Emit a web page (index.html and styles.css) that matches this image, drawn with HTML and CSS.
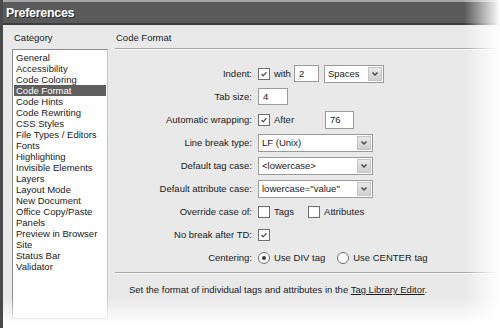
FILE: index.html
```html
<!DOCTYPE html>
<html>
<head>
<meta charset="utf-8">
<link rel="stylesheet" href="styles.css">
</head>
<body>
<div class="window">
  <div class="titlebar"><span class="title">Preferences</span></div>
  <div class="body">
    <div class="sidebar">
      <div class="cat-label">Category</div>
      <ul class="list">
        <li>General</li>
        <li>Accessibility</li>
        <li>Code Coloring</li>
        <li class="sel">Code Format</li>
        <li>Code Hints</li>
        <li>Code Rewriting</li>
        <li>CSS Styles</li>
        <li>File Types / Editors</li>
        <li>Fonts</li>
        <li>Highlighting</li>
        <li>Invisible Elements</li>
        <li>Layers</li>
        <li>Layout Mode</li>
        <li>New Document</li>
        <li>Office Copy/Paste</li>
        <li>Panels</li>
        <li>Preview in Browser</li>
        <li>Site</li>
        <li>Status Bar</li>
        <li>Validator</li>
      </ul>
    </div>
    <div class="main">
      <div class="section-title">Code Format</div>
      <div class="form">
        <div class="lbl">Indent:</div>
        <div class="ctl">
          <span class="cb checked"><svg viewBox="0 0 12 12"><path d="M3 6l2 2.2 4-4.4" /></svg></span>
          <span class="txt">with</span>
          <span class="input w-indent">2</span>
          <span class="select w-spaces"><span class="val">Spaces</span><span class="arrow"><svg viewBox="0 0 8 6"><path d="M1.5 1.5l2.5 2.5 2.5-2.5"/></svg></span></span>
        </div>

        <div class="lbl">Tab size:</div>
        <div class="ctl"><span class="input w-tab">4</span></div>

        <div class="lbl">Automatic wrapping:</div>
        <div class="ctl">
          <span class="cb checked"><svg viewBox="0 0 12 12"><path d="M3 6l2 2.2 4-4.4" /></svg></span>
          <span class="txt after">After</span>
          <span class="input w-wrap">76</span>
        </div>

        <div class="lbl">Line break type:</div>
        <div class="ctl"><span class="select w-wide"><span class="val">LF (Unix)</span><span class="arrow"><svg viewBox="0 0 8 6"><path d="M1.5 1.5l2.5 2.5 2.5-2.5"/></svg></span></span></div>

        <div class="lbl">Default tag case:</div>
        <div class="ctl"><span class="select w-wide"><span class="val">&lt;lowercase&gt;</span><span class="arrow"><svg viewBox="0 0 8 6"><path d="M1.5 1.5l2.5 2.5 2.5-2.5"/></svg></span></span></div>

        <div class="lbl">Default attribute case:</div>
        <div class="ctl"><span class="select w-wide"><span class="val">lowercase="value"</span><span class="arrow"><svg viewBox="0 0 8 6"><path d="M1.5 1.5l2.5 2.5 2.5-2.5"/></svg></span></span></div>

        <div class="lbl">Override case of:</div>
        <div class="ctl">
          <span class="cb"></span><span class="txt tags">Tags</span>
          <span class="cb"></span><span class="txt">Attributes</span>
        </div>

        <div class="lbl">No break after TD:</div>
        <div class="ctl"><span class="cb checked"><svg viewBox="0 0 12 12"><path d="M3 6l2 2.2 4-4.4" /></svg></span></div>

        <div class="lbl">Centering:</div>
        <div class="ctl">
          <span class="radio on"></span><span class="txt div">Use DIV tag</span>
          <span class="radio"></span><span class="txt">Use CENTER tag</span>
        </div>
      </div>
      <div class="footer">Set the format of individual tags and attributes in the <span class="link">Tag Library Editor</span>.</div>
    </div>
  </div>
  <div class="fade-right"></div>
  <div class="fade-bottom"></div>
</div>
</body>
</html>
```

FILE: styles.css
```css
* { box-sizing: border-box; }
html, body { margin: 0; padding: 0; background: #fff; }
body { width: 500px; height: 328px; overflow: hidden; font-family: "Liberation Sans", Arial, sans-serif; font-size: 9.5px; color: #1a1a1a; }

.window { position: relative; width: 500px; height: 328px; background: #e9e9e9; border-left: 3px solid #4a4a4a; overflow: hidden; }

.titlebar { height: 25px; background: #5a5a5a; border-top: 2px solid #a8a8a8; border-bottom: 2px solid #3c3c3c; display: flex; align-items: center; padding-left: 3px; }
.title { color: #fff; font-weight: bold; font-size: 12.5px; letter-spacing: -0.3px; text-shadow: 1px 1px 0 #2a2a2a; }

.body { display: flex; }
.sidebar { width: 109px; padding-left: 9px; flex: none; }
.cat-label { height: 24px; line-height: 26px; padding-left: 2px; }
.list { list-style: none; margin: 0; padding: 2px 1px; background: #fff; border: 1px solid #8c8c8c; border-right-color: #c8c8c8; height: 270px; width: 96px; }
.list li { height: 11px; line-height: 11px; padding-left: 2px; white-space: nowrap; }
.list li.sel { background: #5f5f5f; color: #fff; }

.main { flex: 1; padding-left: 3px; }
.section-title { height: 24px; line-height: 26px; padding-left: 1px; border-bottom: 1px solid #a8a8a8; box-shadow: 0 1px 0 #fafafa; }

.form { display: grid; grid-template-columns: 137px auto; grid-auto-rows: 23px; column-gap: 6px; padding-top: 13px; }
.lbl { text-align: right; display: flex; align-items: center; justify-content: flex-end; white-space: nowrap; }
.ctl { display: flex; align-items: center; white-space: nowrap; }

.cb { width: 12px; height: 12px; border: 1px solid #6e6e6e; background: #fff; flex: none; display: inline-flex; }
.cb svg { width: 10px; height: 10px; fill: none; stroke: #505050; stroke-width: 1.6; }
.txt { margin-left: 4px; }
.txt.after { margin-right: 31px; }
.txt.tags { margin-right: 14px; }
.txt.div { margin-right: 12px; }

.input { height: 17px; background: #fff; border: 1px solid #9a9a9a; display: inline-flex; align-items: center; padding-left: 4px; flex: none; }
.w-indent { width: 25px; margin-left: 3px; }
.w-tab { width: 30px; }
.w-wrap { width: 29px; height: 18px; }

.select { height: 18px; background: #fff; border: 1px solid #9a9a9a; display: inline-flex; align-items: center; justify-content: space-between; padding-left: 3px; padding-right: 1px; flex: none; }
.w-spaces { width: 60px; margin-left: 5px; }
.w-wide { width: 115px; }
.arrow { width: 14px; height: 14px; background: linear-gradient(#eaeaea, #cfcfcf); border: 1px solid #c4c4c4; display: inline-flex; align-items: center; justify-content: center; }
.arrow svg { width: 8px; height: 6px; fill: none; stroke: #4a4a4a; stroke-width: 1.5; }

.radio { width: 12px; height: 12px; border-radius: 50%; border: 1px solid #6e6e6e; background: #fff; flex: none; position: relative; }
.radio.on::after { content: ""; position: absolute; left: 3px; top: 3px; width: 4px; height: 4px; border-radius: 50%; background: #3a3a3a; }

.footer { margin-top: 3px; border-top: 1px solid #a8a8a8; box-shadow: inset 0 1px 0 #fafafa; padding: 11px 0 0 14px; height: 60px; }
.link { text-decoration: underline; }

.fade-right { position: absolute; top: 0; right: 0; width: 36px; height: 100%; background: linear-gradient(to right, rgba(255,255,255,0), #fff); }
.fade-bottom { position: absolute; left: 0; bottom: 0; width: 100%; height: 30px; background: linear-gradient(to bottom, rgba(255,255,255,0), #fff 85%); }
```
